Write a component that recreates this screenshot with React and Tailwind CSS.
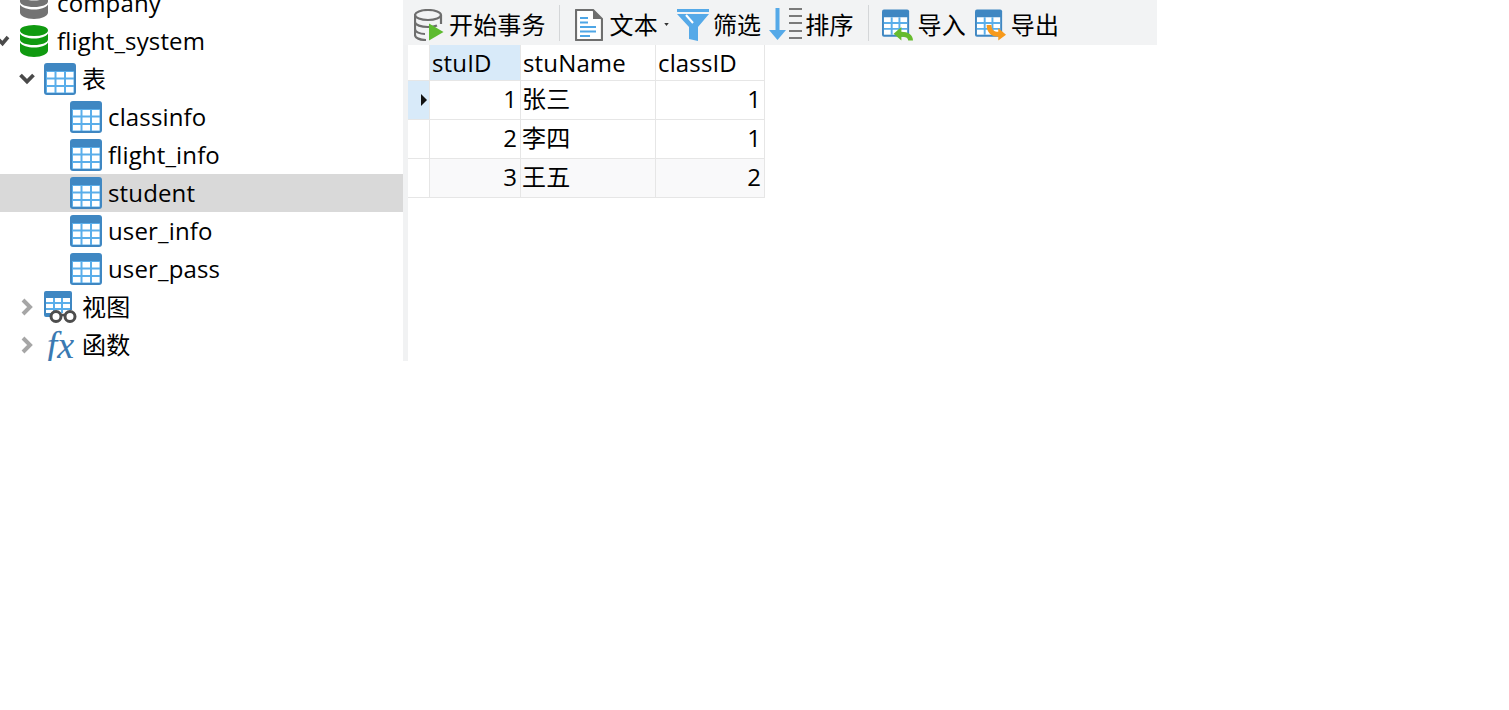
import React from 'react';

const TableIcon = () => (
  <svg viewBox="0 0 32 32" className="shrink-0 w-8 h-8">
    <path d="M3 0h26a3 3 0 0 1 3 3v26a3 3 0 0 1-3 3H3a3 3 0 0 1-3-3V3a3 3 0 0 1 3-3z" fill="#3f87c2" />
    <rect x="2" y="8" width="28" height="22" fill="#5aaeea" />
    {[3, 12.500, 22].map((x) =>
      [9, 16.500, 24].map((y) => <rect key={`${x}-${y}`} x={x} y={y} width="7.500" height="5.500" fill="#fff" />)
    )}
  </svg>
);

const Barrel = ({ color }) => (
  <svg viewBox="0 0 28 32" className="w-7 h-8 shrink-0">
    <ellipse cx="14" cy="5.500" rx="14" ry="5.500" fill={color} />
    <path d="M0 8.500c2 3.500 8 5 14 5s12-1.500 14-5v6c0 3-6 5.500-14 5.500S0 17.500 0 14.500z" fill={color} />
    <path d="M0 17.500c2 3.500 8 5 14 5s12-1.500 14-5v8c0 3.500-6 6.500-14 6.500S0 29 0 25.500z" fill={color} />
  </svg>
);

const Row = ({ selected, indent, children, label }) => (
  <div className={`h-[38px] flex items-center shrink-0 ${selected ? 'bg-[#d9d9d9]' : ''}`}>
    <div className={`flex items-center ${indent}`}>{children}</div>
    <span className="whitespace-nowrap">{label}</span>
  </div>
);

const ClosedChevron = () => (
  <svg viewBox="0 0 14 18" className="w-3.5 h-[18px] mr-[9px] shrink-0" fill="none" stroke="#a6a6a6" strokeWidth="4">
    <path d="M2 2l7 7-7 7" />
  </svg>
);

const tables = ['classinfo', 'flight_info', 'student', 'user_info', 'user_pass'];

const Sidebar = () => (
  <div className="w-[403px] h-[361px] overflow-hidden shrink-0 bg-white">
    <div className="flex flex-col -mt-4">
      <Row indent="pl-[20px] pr-[9px]" label="company">
        <Barrel color="#737373" />
      </Row>
      <Row indent="pr-[9px]" label="flight_system">
        <svg viewBox="0 0 20 16" className="w-5 h-4 shrink-0" fill="none" stroke="#4a4a4a" strokeWidth="3.600">
          <path d="M-2 6l4.500 4.500L8 4" />
        </svg>
        <Barrel color="#109a10" />
      </Row>
      <Row indent="pl-[19px] pr-[6px]" label="表">
        <svg viewBox="0 0 16 12" className="w-4 h-3 mr-[9px] shrink-0" fill="none" stroke="#4a4a4a" strokeWidth="3.800">
          <path d="M1.500 2 8 8.500 14.500 2" />
        </svg>
        <TableIcon />
      </Row>
      {tables.map((t) => (
        <Row key={t} indent="pl-[70px] pr-[6px]" label={t} selected={t === 'student'}>
          <TableIcon />
        </Row>
      ))}
      <Row indent="pl-[21px] pr-[5px]" label="视图">
        <ClosedChevron />
        <svg viewBox="0 0 33 32" className="w-[33px] h-8 shrink-0">
          <path d="M2 0h24a2 2 0 0 1 2 2v17H14l-6 6v1H2a2 2 0 0 1-2-2V2a2 2 0 0 1 2-2z" fill="#3f87c2" />
          <rect x="2" y="7" width="24" height="15" fill="#fff" />
          <path d="M2 12h24M2 18h24M10 7v15M18 7v15" stroke="#5aaeea" strokeWidth="2" />
          <circle cx="12" cy="25.500" r="5" fill="#fff" stroke="#4d4d4d" strokeWidth="3" />
          <circle cx="26" cy="25.500" r="5" fill="#fff" stroke="#4d4d4d" strokeWidth="3" />
          <path d="M16 24h6" stroke="#4d4d4d" strokeWidth="2.500" />
        </svg>
      </Row>
      <Row indent="pl-[21px] pr-[5px]" label="函数">
        <ClosedChevron />
        <span className="w-[33px] text-center text-[#3a7ab2] text-[38px] leading-[38px] italic font-['Liberation_Serif',serif]">fx</span>
      </Row>
    </div>
  </div>
);

const ToolButton = ({ icon, label, className = '' }) => (
  <div className={`flex items-center ${className}`}>
    {icon}
    <span className="whitespace-nowrap">{label}</span>
  </div>
);

const Sep = ({ className }) => <div className={`w-px h-[36px] bg-[#d4d6d8] ${className}`} />;

const GridBase = () => (
  <>
    <path d="M2 0h24a2 2 0 0 1 2 2v26H2a2 2 0 0 1-2-2V2a2 2 0 0 1 2-2z" fill="#3f87c2" />
    <rect x="2" y="8" width="24" height="18" fill="#fff" />
    <path d="M2 14h24M2 20h24M10 8v18M18 8v18" stroke="#5aaeea" strokeWidth="2" />
  </>
);

const Toolbar = () => (
  <div className="h-[45px] flex items-center bg-[#f2f3f4] pl-[11px] pt-1">
    <ToolButton
      label="开始事务"
      icon={
        <svg viewBox="0 0 30 32" className="w-[30px] h-8 mr-[5px] shrink-0">
          <ellipse cx="14" cy="6" rx="13" ry="5" fill="none" stroke="#6e6e6e" strokeWidth="2.200" />
          <path d="M1 6v20c0 3 5 5 11 5M27 6v9M1 13c0 3 6 5 13 5 4 0 7-.6 9-1.500M1 20c0 3 5 5 10 5" fill="none" stroke="#6e6e6e" strokeWidth="2.200" />
          <path d="M15 14.500v17L29.500 23z" fill="#5dbb2f" />
        </svg>
      }
    />
    <Sep className="ml-[13px] mr-[15px] -mt-1" />
    <ToolButton
      label="文本"
      icon={
        <svg viewBox="0 0 28 32" className="w-7 h-8 mr-[7px] shrink-0">
          <path d="M1 1h17l9 9v21H1z" fill="#fff" stroke="#6e6e6e" strokeWidth="2.200" strokeLinejoin="round" />
          <path d="M18 1v9h9z" fill="#6e6e6e" />
          <path d="M5 9h8M5 13.500h8M5 18h16M5 22.500h16M5 27h10" stroke="#4ea6e6" strokeWidth="2.200" />
        </svg>
      }
    />
    <svg viewBox="0 0 6 4" className="w-[5px] h-[3px] ml-[6px] mr-[8px] shrink-0"><path d="M0 0h6L3 4z" fill="#333" /></svg>
    <ToolButton
      label="筛选"
      icon={
        <svg viewBox="0 0 32 32" className="w-8 h-8 mr-[4px] shrink-0">
          <rect x="0" y="0" width="32" height="3" fill="#55a9e8" />
          <path d="M0 5h32L21 18v14l-9-2V18z" fill="#55a9e8" />
          <path d="M9 6l7 8" stroke="#fff" strokeWidth="2" />
        </svg>
      }
    />
    <ToolButton
      className="ml-[8px]"
      label="排序"
      icon={
        <svg viewBox="0 0 34 34" className="w-[34px] h-[34px] mr-[2px] shrink-0">
          <path d="M8.500 0v24" stroke="#55a9e8" strokeWidth="4" />
          <path d="M0 22h17L8.500 32z" fill="#55a9e8" />
          <path d="M20 1h13M20 8h13M20 15h13M20 23h13M20 30h13" stroke="#7a7a7a" strokeWidth="2" />
        </svg>
      }
    />
    <Sep className="ml-[14px] mr-[13px] -mt-1" />
    <ToolButton
      label="导入"
      icon={
        <svg viewBox="0 0 32 32" className="w-[31px] h-8 mr-[5px] shrink-0">
          <GridBase />
          <path d="M12 25l8-7v5c7 0 12 3 12 9h-5c0-3-3-4-7-4v4z" fill="#66bb2e" />
        </svg>
      }
    />
    <ToolButton
      className="ml-[9px]"
      label="导出"
      icon={
        <svg viewBox="0 0 32 32" className="w-[31px] h-8 mr-[5px] shrink-0">
          <GridBase />
          <path d="M12 16h5c0 5 3 7 7 7v-4l8 7-8 6v-4c-7 0-12-4-12-12z" fill="#f79a1c" />
        </svg>
      }
    />
  </div>
);

const rows = [
  { id: 1, name: '张三', cls: 1 },
  { id: 2, name: '李四', cls: 1 },
  { id: 3, name: '王五', cls: 2 },
];

const Grid = () => (
  <div className="grid grid-cols-[22px_91px_135px_109px] grid-rows-[36px_39px_39px_39px] w-[357px]">
    <div className="border-r border-b border-[#e6e6e6]" />
    <div className="bg-[#d8eaf9] border-r border-b border-[#e6e6e6] pl-[2px] leading-[36px]">stuID</div>
    <div className="border-r border-b border-[#e6e6e6] pl-[2px] leading-[36px]">stuName</div>
    <div className="border-r border-b border-[#e6e6e6] pl-[2px] leading-[36px]">classID</div>
    {rows.map((r, i) => {
      const tint = i === 2 ? 'bg-[#f9f9fa]' : '';
      return (
        <React.Fragment key={r.id}>
          <div className={`border-r border-b border-[#e6e6e6] flex items-center pl-[13px] ${i === 0 ? 'bg-[#d8eaf9]' : ''}`}>
            {i === 0 && (
              <svg viewBox="0 0 6 12" className="w-1.5 h-3"><path d="M0 0l6 6-6 6z" fill="#111" /></svg>
            )}
          </div>
          <div className={`border-r border-b border-[#e6e6e6] text-right pr-[3px] leading-[36px] ${tint}`}>{r.id}</div>
          <div className={`border-r border-b border-[#e6e6e6] pl-[1px] leading-[36px] ${tint}`}>{r.name}</div>
          <div className={`border-r border-b border-[#e6e6e6] text-right pr-[3px] leading-[36px] ${tint}`}>{r.cls}</div>
        </React.Fragment>
      );
    })}
  </div>
);

export default function App() {
  return (
    <div className="w-[1509px] h-[710px] bg-white text-black text-[24px] tracking-[0.15px] font-['Open_Sans','Noto_Sans_CJK_SC',sans-serif] overflow-hidden">
      <div className="flex w-[1157px] h-[361px]">
        <Sidebar />
        <div className="flex-1 flex flex-col bg-[#f1f2f3]">
          <Toolbar />
          <div className="flex-1 ml-[5px] bg-white">
            <Grid />
          </div>
        </div>
      </div>
    </div>
  );
}
